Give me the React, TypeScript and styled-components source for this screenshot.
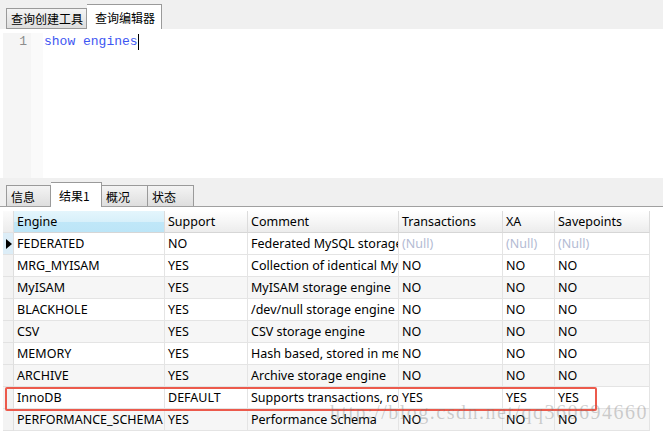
import React from 'react';
import styled, { createGlobalStyle } from 'styled-components';

const GlobalStyle = createGlobalStyle`
  html, body {
    margin: 0;
    padding: 0;
    background: #f0f0f0;
  }
`

const Window = styled.div`
  position: relative;
  width: 663px;
  height: 435px;
  overflow: hidden;
  background: #f0f0f0;
  font-family: "Noto Sans", "Noto Sans CJK SC", sans-serif;
  color: #000;
`

const TabStrip = styled.div<{ $line?: boolean }>`
  display: flex;
  align-items: flex-end;
  height: ${p => p.$line ? 28 : 29}px;
  padding-left: 6px;
  box-sizing: border-box;
  ${p => p.$line && 'border-bottom: 1px solid #a0a0a0;'}
`

const Tab = styled.div<{ $active?: boolean; $width: number; $line?: boolean }>`
  width: ${p => p.$width}px;
  height: ${p => p.$active ? 25 : 21}px;
  box-sizing: border-box;
  padding-left: ${p => p.$active ? 8 : 4}px;
  display: flex;
  align-items: center;
  font-family: "Noto Sans CJK SC", sans-serif;
  font-size: 12px;
  border: 1px solid #9a9a9a;
  border-bottom: ${p => p.$active ? 'none' : '1px solid #9a9a9a'};
  background: ${p => p.$active ? '#fff' : 'linear-gradient(#f4f4f4, #dedede)'};
  margin-bottom: ${p => p.$active && p.$line ? -1 : 0}px;
  ${p => !p.$active && p.$line && 'border-bottom: none;'}
  & + & {
    border-left: none;
  }
`

const Editor = styled.div`
  display: flex;
  height: 149px;
  background: #fff;
  padding-left: 3px;
`

const Gutter = styled.div`
  display: flex;
  margin-top: 4px;
`

const LineNumbers = styled.div`
  width: 28px;
  background: #f5f5f5;
  font-family: "Liberation Mono", monospace;
  font-size: 13px;
  line-height: 16px;
  color: #8c8c8c;
  text-align: right;
  padding-right: 4px;
  box-sizing: border-box;
  padding-top: 1px;
`

const FoldMargin = styled.div`
  width: 12px;
  background-color: #fafafa;
  background-image: radial-gradient(#eeeeee 0.6px, transparent 0.7px);
  background-size: 2px 2px;
`

const Code = styled.div`
  padding: 5px 0 0 1px;
  font-family: "Liberation Mono", monospace;
  font-size: 13px;
  line-height: 16px;
  color: #3d56f2;
  display: flex;
  align-items: flex-start;
`

const Caret = styled.span`
  display: inline-block;
  width: 1px;
  height: 16px;
  background: #000;
`

const Splitter = styled.div`
  height: 1px;
`

const GridArea = styled.div`
  background: #fff;
  padding: 4px 0 0 3px;
  height: 300px;
`

const COLS = '11px 151px 83px 151px 104px 52px 95px';

const Row = styled.div<{ $shade?: boolean }>`
  display: grid;
  grid-template-columns: ${COLS};
  width: 647px;
  height: 22px;
  background: ${p => p.$shade ? '#f6f6f6' : '#fff'};
`

const Indicator = styled.div<{ $current?: boolean; $header?: boolean }>`
  background: ${p => p.$header ? 'linear-gradient(#fbfbfb, #ececec)' : p.$current ? '#dcedf7' : '#f3f3f3'};
  border-right: 1px solid #dedede;
  border-bottom: 1px solid #e2e2e2;
  display: flex;
  align-items: center;
  justify-content: center;
  box-sizing: border-box;
`

const Triangle = styled.span`
  width: 0;
  height: 0;
  border-top: 5px solid transparent;
  border-bottom: 5px solid transparent;
  border-left: 6px solid #000;
  margin-left: 1px;
`

const HeadCell = styled.div<{ $selected?: boolean }>`
  box-sizing: border-box;
  padding-left: 3px;
  display: flex;
  align-items: center;
  font-size: 12.5px;
  white-space: nowrap;
  overflow: hidden;
  border-right: 1px solid #dcdcdc;
  border-bottom: 1px solid #d6d6d6;
  background: ${p => p.$selected
    ? 'linear-gradient(#e4f5fc 0%, #d8f0fa 50%, #c0e7f8 51%, #bce5f7 100%)'
    : 'linear-gradient(#ffffff 0%, #f6f6f6 50%, #ececec 100%)'};
`

const Cell = styled.div<{ $null?: boolean }>`
  box-sizing: border-box;
  padding-left: 3px;
  display: flex;
  align-items: center;
  font-size: 12.5px;
  white-space: nowrap;
  overflow: hidden;
  border-right: 1px solid #e4e4e4;
  border-bottom: 1px solid #e4e4e4;
  color: ${p => p.$null ? '#b3bbd3' : '#000'};
`

const Highlight = styled.div`
  position: absolute;
  left: 5px;
  top: 387px;
  width: 592px;
  height: 24px;
  box-sizing: border-box;
  border: 2px solid #ec5a4c;
  border-radius: 2px;
  pointer-events: none;
`

const Watermark = styled.div`
  position: absolute;
  left: 330px;
  top: 401px;
  font-family: "Liberation Serif", serif;
  font-size: 20px;
  letter-spacing: 1.5px;
  color: rgba(120, 120, 120, 0.35);
  pointer-events: none;
  white-space: nowrap;
`

const headers = ['Engine', 'Support', 'Comment', 'Transactions', 'XA', 'Savepoints'];

const rows: (string | null)[][] = [
  ['FEDERATED', 'NO', 'Federated MySQL storage engine', null, null, null],
  ['MRG_MYISAM', 'YES', 'Collection of identical MyISAM tables', 'NO', 'NO', 'NO'],
  ['MyISAM', 'YES', 'MyISAM storage engine', 'NO', 'NO', 'NO'],
  ['BLACKHOLE', 'YES', '/dev/null storage engine (anything you write to it disappears)', 'NO', 'NO', 'NO'],
  ['CSV', 'YES', 'CSV storage engine', 'NO', 'NO', 'NO'],
  ['MEMORY', 'YES', 'Hash based, stored in memory, useful for temporary tables', 'NO', 'NO', 'NO'],
  ['ARCHIVE', 'YES', 'Archive storage engine', 'NO', 'NO', 'NO'],
  ['InnoDB', 'DEFAULT', 'Supports transactions, row-level locking, and foreign keys', 'YES', 'YES', 'YES'],
  ['PERFORMANCE_SCHEMA', 'YES', 'Performance Schema', 'NO', 'NO', 'NO'],
];

export default function App() {
  return (
    <Window>
      <GlobalStyle />
      <TabStrip>
        <Tab $width={81}>查询创建工具</Tab>
        <Tab $width={75} $active>查询编辑器</Tab>
      </TabStrip>
      <Editor>
        <Gutter>
          <LineNumbers>1</LineNumbers>
          <FoldMargin />
        </Gutter>
        <Code>show engines<Caret /></Code>
      </Editor>
      <Splitter />
      <TabStrip $line>
        <Tab $width={45} $line>信息</Tab>
        <Tab $width={51} $line $active>结果1</Tab>
        <Tab $width={46} $line>概况</Tab>
        <Tab $width={46} $line>状态</Tab>
      </TabStrip>
      <GridArea>
        <Row>
          <Indicator $header />
          {headers.map((h, i) => (
            <HeadCell key={h} $selected={i === 0}>{h}</HeadCell>
          ))}
        </Row>
        {rows.map((r, i) => (
          <Row key={r[0] as string} $shade={i % 2 === 0 && i > 0}>
            <Indicator $current={i === 0}>{i === 0 && <Triangle />}</Indicator>
            {r.map((v, j) => (
              <Cell key={j} $null={v === null}>{v === null ? '(Null)' : v}</Cell>
            ))}
          </Row>
        ))}
      </GridArea>
      <Highlight />
      <Watermark>http://blog.csdn.net/qq360694660</Watermark>
    </Window>
  );
}
